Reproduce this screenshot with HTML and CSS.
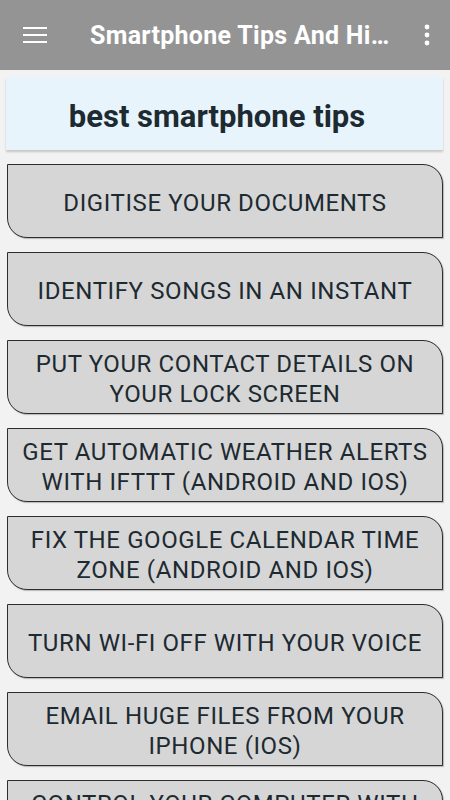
FILE: index.html
```html
<!DOCTYPE html>
<html lang="en">
<head>
  <meta charset="UTF-8" />
  <meta name="viewport" content="width=device-width, initial-scale=1.0"/>
  <title>Smartphone Tips And Hints</title>
  <link rel="stylesheet" href="styles.css">
</head>
<body>

  <div class="barra-topo">
    <svg class="icone-menu" width="24" height="18" viewBox="0 0 24 18">
      <rect x="0" y="1" width="24" height="2" fill="#fff"/>
      <rect x="0" y="8" width="24" height="2" fill="#fff"/>
      <rect x="0" y="15" width="24" height="2" fill="#fff"/>
    </svg>
    <h1 class="titulo">Smartphone Tips And Hints</h1>
    <svg class="icone-mais" width="6" height="22" viewBox="0 0 6 22">
      <circle cx="3" cy="3" r="2.4" fill="#fff"/>
      <circle cx="3" cy="11" r="2.4" fill="#fff"/>
      <circle cx="3" cy="19" r="2.4" fill="#fff"/>
    </svg>
  </div>

  <div class="conteudo">
    <div class="cabecalho">best smartphone tips</div>

    <button class="dica">DIGITISE YOUR DOCUMENTS</button>
    <button class="dica">IDENTIFY SONGS IN AN INSTANT</button>
    <button class="dica">PUT YOUR CONTACT DETAILS ON YOUR LOCK SCREEN</button>
    <button class="dica">GET AUTOMATIC WEATHER ALERTS WITH IFTTT (ANDROID AND IOS)</button>
    <button class="dica">FIX THE GOOGLE CALENDAR TIME ZONE (ANDROID AND IOS)</button>
    <button class="dica">TURN WI-FI OFF WITH YOUR VOICE</button>
    <button class="dica">EMAIL HUGE FILES FROM YOUR IPHONE (IOS)</button>
    <button class="dica">CONTROL YOUR COMPUTER WITH YOUR PHONE</button>
  </div>

</body>
</html>
```

FILE: styles.css
```css
* {
  box-sizing: border-box;
  margin: 0;
  padding: 0;
}

body {
  font-family: Roboto, "Noto Sans", Arial, sans-serif;
  background-color: #f2f2f2;
  height: 800px;
  overflow: hidden;
}

/* BARRA DO TOPO */
.barra-topo {
  height: 70px;
  background-color: #949494;
  display: flex;
  align-items: center;
  padding: 0 23px;
}

.icone-menu {
  flex-shrink: 0;
}

.titulo {
  color: white;
  font-size: 25px;
  letter-spacing: 0.3px;
  font-weight: bold;
  margin-left: 43px;
  width: 300px;
  white-space: nowrap;
  overflow: hidden;
  text-overflow: ellipsis;
}

.icone-mais {
  margin-left: auto;
  margin-right: -3px;
}

/* CONTEUDO */
.conteudo {
  padding: 7px 7px 0 6px;
  display: flex;
  flex-direction: column;
  gap: 14px;
}

.cabecalho {
  height: 73px;
  background-color: #e8f4fb;
  color: #1d2a31;
  font-size: 31px;
  font-weight: bold;
  display: flex;
  align-items: center;
  justify-content: center;
  padding: 6px 15px 0 0;
  box-shadow: 0 2px 2px rgba(0, 0, 0, 0.18);
}

.dica {
  flex-shrink: 0;
  height: 74px;
  margin-left: 1px;
  background-color: #d6d6d6;
  border: 1px solid #2e2e2e;
  border-radius: 0 20px 0 20px;
  color: #1d2a31;
  font-family: Roboto, "Noto Sans", Arial, sans-serif;
  font-size: 24px;
  letter-spacing: 0.6px;
  line-height: 30px;
  padding: 4px 8px 0;
  text-align: center;
  box-shadow: 1px 1px 1px rgba(0, 0, 0, 0.25);
}
```
